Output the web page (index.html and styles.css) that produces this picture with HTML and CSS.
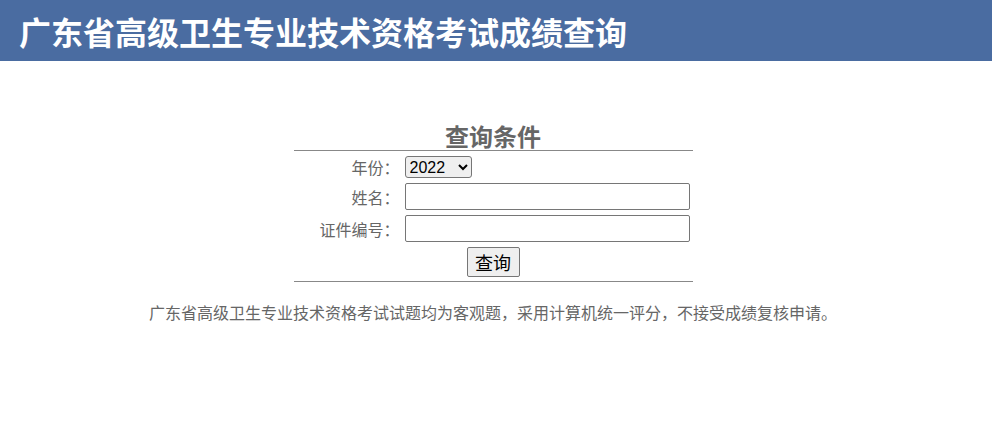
FILE: index.html
```html
<!DOCTYPE html>
<html lang="zh-CN">
<head>
<meta charset="utf-8">
<title>广东省高级卫生专业技术资格考试成绩查询</title>
<link rel="stylesheet" href="styles.css">
</head>
<body>
<header class="top">
  <h1 class="top-title">广东省高级卫生专业技术资格考试成绩查询</h1>
</header>
<main class="main">
  <h2 class="query-title">查询条件</h2>
  <form class="query-box">
    <label class="lbl" for="year">年份：</label>
    <div class="field">
      <select id="year" class="sel">
        <option>2022</option>
      </select>
    </div>
    <label class="lbl" for="name">姓名：</label>
    <div class="field"><input id="name" class="txt" type="text"></div>
    <label class="lbl" for="idno">证件编号：</label>
    <div class="field"><input id="idno" class="txt" type="text"></div>
    <button class="btn" type="button">查询</button>
  </form>
  <p class="note">广东省高级卫生专业技术资格考试试题均为客观题，采用计算机统一评分，不接受成绩复核申请。</p>
</main>
</body>
</html>
```

FILE: styles.css
```css
html, body {
  margin: 0;
  padding: 0;
  background: #fff;
}
body {
  font-family: "Liberation Sans", "Noto Sans CJK SC", sans-serif;
  color: #666;
}
.top {
  height: 61px;
  background: #4a6ca1;
  display: flex;
  align-items: center;
  padding-left: 19px;
}
.top-title {
  margin: 0;
  font-size: 32px;
  line-height: 40px;
  font-weight: bold;
  color: #fff;
  font-family: "Noto Sans CJK SC", sans-serif;
}
.main {
  padding-right: 6px;
}
.query-title {
  margin: 61px 0 0;
  text-align: center;
  font-size: 24px;
  line-height: 28px;
  font-weight: bold;
  color: #666;
  font-family: "Noto Sans CJK SC", sans-serif;
}
.query-box {
  width: 399px;
  margin: 0 auto;
  border-top: 1px solid #888;
  border-bottom: 1px solid #888;
  display: grid;
  grid-template-columns: 106px 1fr;
  column-gap: 5px;
  row-gap: 5px;
  padding: 5px 0 4px;
}
.lbl {
  font-size: 16px;
  line-height: 20px;
  text-align: right;
  align-self: center;
  color: #666;
  font-family: "Noto Sans CJK SC", sans-serif;
}
.field {
  display: flex;
  align-items: center;
}
.sel {
  font-family: "Liberation Sans", sans-serif;
  font-size: 16px;
  height: 22px;
  width: 67px;
  color: #000;
  margin: 0;
  border-radius: 3px;
}
.txt {
  box-sizing: border-box;
  width: 285px;
  height: 27px;
  margin: 0;
  border: 1px solid #767676;
  border-radius: 2px;
  font-size: 16px;
}
.btn {
  grid-column: 1 / -1;
  justify-self: center;
  box-sizing: border-box;
  width: 53px;
  height: 30px;
  padding: 0;
  font-size: 18px;
  font-family: "Noto Sans CJK SC", sans-serif;
  line-height: 1;
  color: #000;
  background: #efefef;
  border: 1px solid #767676;
  border-radius: 2px;
}
.note {
  margin: 20px 0 0;
  text-align: center;
  font-size: 16px;
  line-height: 20px;
  color: #666;
  font-family: "Noto Sans CJK SC", sans-serif;
}
```
